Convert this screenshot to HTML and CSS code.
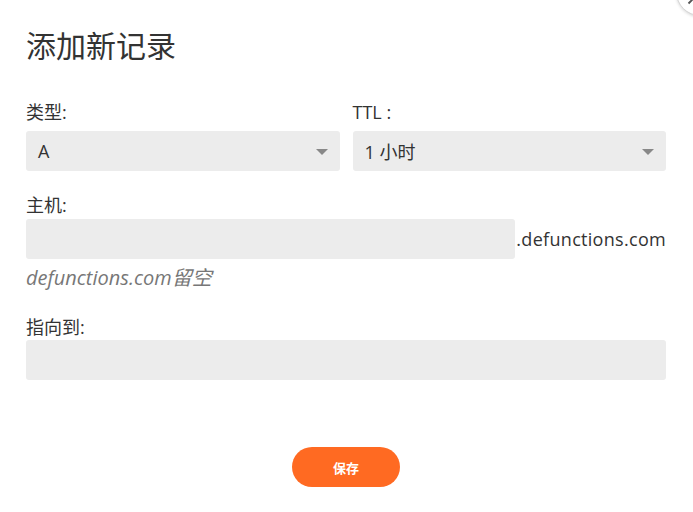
FILE: index.html
```html
<!DOCTYPE html>
<html>
<head>
    <title>添加新记录</title>
    <link rel="stylesheet" href="styles.css">
</head>
<body>
    <div class="modal">
        <a class="close" href="#" title="关闭">
            <svg width="48" height="48" viewBox="0 0 48 48">
                <path d="M12 12 L36 36 M36 12 L12 36" stroke="#555" stroke-width="2" fill="none"/>
            </svg>
        </a>

        <h1>添加新记录</h1>

        <div class="row-two">
            <div class="field">
                <label class="label label-first">类型:</label>
                <div class="select">
                    <span>A</span>
                    <i class="caret"></i>
                </div>
            </div>
            <div class="field">
                <label class="label label-first">TTL :</label>
                <div class="select">
                    <span>1 小时</span>
                    <i class="caret"></i>
                </div>
            </div>
        </div>

        <div class="field field-host">
            <label class="label" for="host">主机:</label>
            <div class="host-row">
                <input type="text" id="host">
                <span class="suffix">.defunctions.com</span>
            </div>
            <p class="hint">defunctions.com留空</p>
        </div>

        <div class="field field-target">
            <label class="label" for="target">指向到:</label>
            <input type="text" id="target">
        </div>

        <div class="actions">
            <button>保存</button>
        </div>
    </div>
</body>
</html>
```

FILE: styles.css
```css
html, body {
    margin: 0;
    height: 100%;
    overflow: hidden;
    background-color: white;
}
body {
    font-family: "Open Sans", "Noto Sans CJK SC", sans-serif;
    color: #333;
}
.modal {
    position: relative;
    padding: 31px 27px 0 26px;
}
.close {
    position: absolute;
    top: -32px;
    right: -31px;
    width: 48px;
    height: 48px;
    border: 1px solid #d6d6d6;
    border-radius: 50%;
    background-color: white;
    box-shadow: 0 1px 3px rgba(0,0,0,0.15);
    box-sizing: border-box;
    display: flex;
    align-items: center;
    justify-content: center;
}
h1 {
    margin: 0;
    font-size: 30px;
    line-height: 30px;
    font-weight: normal;
    color: #333;
}
.label {
    display: block;
    font-size: 18px;
    line-height: 22px;
    margin-bottom: 3px;
}
.label-first {
    margin-bottom: 8px;
}
.row-two {
    display: grid;
    grid-template-columns: 1fr 1fr;
    gap: 13px;
    margin-top: 40px;
}
.select {
    height: 40px;
    background-color: #ececec;
    border-radius: 3px;
    display: flex;
    align-items: center;
    justify-content: space-between;
    padding: 0 12px 0 12px;
    font-size: 18px;
}
.caret {
    width: 0;
    height: 0;
    border-left: 6px solid transparent;
    border-right: 6px solid transparent;
    border-top: 6px solid #888;
    margin-top: 2px;
}
.field-host {
    margin-top: 23px;
}
.host-row {
    display: flex;
    align-items: center;
}
input[type="text"] {
    height: 40px;
    border: none;
    border-radius: 3px;
    background-color: #ececec;
    box-sizing: border-box;
    padding: 0 12px;
    font-family: inherit;
    font-size: 18px;
    color: #333;
    outline: none;
}
.host-row input {
    flex: 1;
    min-width: 0;
}
.suffix {
    font-size: 18px;
    margin-left: 1px;
    letter-spacing: 0.3px;
}
#target {
    display: block;
    width: 100%;
}
.hint {
    margin: 8px 0 0 0;
    font-size: 20px;
    line-height: 22px;
    color: #777;
    font-style: italic;
}
.field-target {
    margin-top: 27px;
}
.field-target .label {
    margin-bottom: 2px;
}
.actions {
    margin-top: 67px;
    text-align: center;
}
button {
    width: 108px;
    height: 40px;
    border: none;
    border-radius: 20px;
    background-color: #ff6a22;
    color: white;
    font-family: "Noto Sans CJK SC", sans-serif;
    font-size: 13px;
    font-weight: bold;
    cursor: pointer;
}
```
